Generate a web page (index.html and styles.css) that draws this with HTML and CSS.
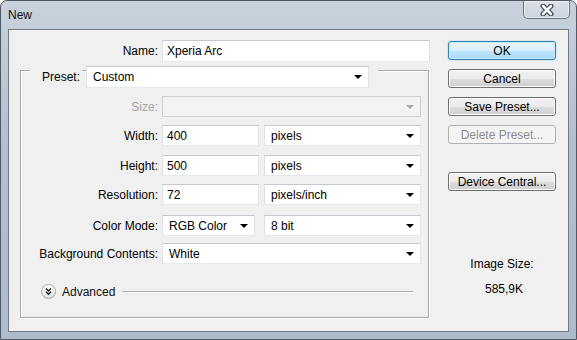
FILE: index.html
```html
<!DOCTYPE html>
<html>
<head>
    <title>New</title>
    <link rel="stylesheet" href="styles.css">
</head>
<body>
    <div class="window">
        <div class="titlebar">
            <span class="title">New</span>
            <div class="close">
                <svg width="16" height="12" viewBox="0 0 16 12">
                    <path d="M4 2 L12 10 M12 2 L4 10" stroke="#3b4654" stroke-width="5" stroke-linecap="round"/>
                    <path d="M4 2 L12 10 M12 2 L4 10" stroke="#fff" stroke-width="2.6" stroke-linecap="round"/>
                </svg>
            </div>
        </div>
        <div class="client">
            <div class="main">
                <div class="name-row">
                    <label>Name:</label>
                    <input class="text" value="Xperia Arc">
                </div>
                <div class="group">
                    <div class="group-head">
                        <label class="preset-label">Preset:</label>
                        <div class="combo preset"><span>Custom</span><i class="caret"></i></div>
                        <span class="mask"></span>
                    </div>
                    <div class="rows">
                        <div class="row off">
                            <label>Size:</label>
                            <div class="combo"><span></span><i class="caret"></i></div>
                        </div>
                        <div class="row">
                            <label>Width:</label>
                            <div class="pair">
                                <input class="text" value="400">
                                <div class="combo"><span>pixels</span><i class="caret"></i></div>
                            </div>
                        </div>
                        <div class="row height">
                            <label>Height:</label>
                            <div class="pair">
                                <input class="text" value="500">
                                <div class="combo"><span>pixels</span><i class="caret"></i></div>
                            </div>
                        </div>
                        <div class="row">
                            <label>Resolution:</label>
                            <div class="pair">
                                <input class="text" value="72">
                                <div class="combo"><span>pixels/inch</span><i class="caret"></i></div>
                            </div>
                        </div>
                        <div class="row mode">
                            <label>Color Mode:</label>
                            <div class="pair wide">
                                <div class="combo"><span>RGB Color</span><i class="caret"></i></div>
                                <div class="combo"><span>8 bit</span><i class="caret"></i></div>
                            </div>
                        </div>
                        <div class="row bg">
                            <label>Background Contents:</label>
                            <div class="combo"><span>White</span><i class="caret"></i></div>
                        </div>
                    </div>
                    <div class="advanced">
                        <span class="adv-icon">
                            <svg width="15" height="15" viewBox="0 0 15 15">
                                <defs>
                                    <linearGradient id="g" x1="0" y1="0" x2="0" y2="1">
                                        <stop offset="0" stop-color="#ffffff"/>
                                        <stop offset="1" stop-color="#dcdcdc"/>
                                    </linearGradient>
                                </defs>
                                <circle cx="7.5" cy="7.5" r="7" fill="url(#g)" stroke="#a7a7a7"/>
                                <path d="M5 4.5 L7.5 7 L10 4.5 M5 7.8 L7.5 10.3 L10 7.8" fill="none" stroke="#222" stroke-width="1.4"/>
                            </svg>
                        </span>
                        <span class="adv-text">Advanced</span>
                        <span class="adv-line"></span>
                    </div>
                </div>
            </div>
            <div class="side">
                <button class="btn default">OK</button>
                <button class="btn">Cancel</button>
                <button class="btn">Save Preset...</button>
                <button class="btn" disabled>Delete Preset...</button>
                <button class="btn central">Device Central...</button>
                <div class="size-title">Image Size:</div>
                <div class="size-value">585,9K</div>
            </div>
        </div>
    </div>
</body>
</html>
```

FILE: styles.css
```css
body {
    margin: 0;
    font-family: "Liberation Sans", Arial, sans-serif;
    font-size: 12px;
    color: #000;
    background: #fff;
}
.window {
    height: 340px;
    box-sizing: border-box;
    border: 1px solid #4e5966;
    border-radius: 7px 7px 0 0;
    background: linear-gradient(#c9d2dc, #b4c0cc 40%, #aebbc8);
    display: flex;
    flex-direction: column;
}
.titlebar {
    height: 28px;
    display: flex;
    justify-content: space-between;
    align-items: flex-start;
}
.title {
    padding: 7px 0 0 7px;
    font-size: 12px;
    color: #111;
}
.close {
    width: 47px;
    height: 18px;
    margin-right: 6px;
    box-sizing: border-box;
    border: 1px solid #6a7584;
    border-top: none;
    border-radius: 0 0 5px 5px;
    box-shadow: inset 0 0 0 1px rgba(255, 255, 255, 0.55);
    background: linear-gradient(rgba(255, 255, 255, 0.35), rgba(255, 255, 255, 0.08));
    display: flex;
    align-items: center;
    justify-content: center;
}
.client {
    flex: 1;
    margin: 0 7px 7px 7px;
    border: 1px solid #6f7b89;
    background: #f0f0f0;
    display: flex;
    padding-top: 10px;
}
.main {
    width: 422px;
}
.name-row {
    display: grid;
    grid-template-columns: 149px 268px;
    column-gap: 4px;
    align-items: center;
}
label {
    text-align: right;
    white-space: nowrap;
}
.text {
    height: 22px;
    box-sizing: border-box;
    margin: 0;
    padding: 0 4px;
    font: inherit;
    color: #000;
    background: #fff;
    border: 1px solid;
    border-color: #c5c8cf #e2e3ea #e3e9ef #dbdfe6;
    outline: none;
}
.combo {
    height: 22px;
    box-sizing: border-box;
    background: #fff;
    border: 1px solid;
    border-color: #c5c8cf #e2e3ea #e3e9ef #dbdfe6;
    display: flex;
    align-items: center;
    justify-content: space-between;
    padding: 0 6px;
}
.caret {
    width: 0;
    height: 0;
    border-left: 4px solid transparent;
    border-right: 4px solid transparent;
    border-top: 4px solid #000;
}
.group {
    margin: 8px 0 0 11px;
    width: 409px;
    box-sizing: border-box;
    border: 1px solid #a9a9a9;
    box-shadow: 1px 1px 0 #fff, inset 1px 1px 0 #fff;
    padding-bottom: 18px;
}
.group-head {
    margin: -5px 0 0 9px;
    display: flex;
    align-items: center;
}
.preset-label {
    width: 52px;
    box-sizing: border-box;
    padding-left: 12px;
    text-align: left;
    background: #f0f0f0;
    line-height: 22px;
}
.preset {
    width: 283px;
    margin-left: 4px;
}
.mask {
    width: 9px;
    height: 22px;
    background: #f0f0f0;
}
.rows {
    margin-top: 8px;
    display: flex;
    flex-direction: column;
    gap: 8px;
}
.row {
    display: grid;
    grid-template-columns: 137px 259px;
    column-gap: 4px;
    align-items: center;
}
.row .combo, .row .text {
    height: 21px;
}
.row.height {
    margin-top: 1px;
}
.row.mode {
    margin-top: 2px;
}
.row.bg {
    margin-top: -1px;
}
.pair {
    display: grid;
    grid-template-columns: 97px 157px;
    column-gap: 5px;
}
.pair .text {
    width: 97px;
}
.pair.wide {
    grid-template-columns: 93px 157px;
    column-gap: 9px;
}
.row.off label {
    color: #a3a3a3;
}
.row.off .combo {
    background: #f3f3f3;
    border-color: #cfcfcf;
}
.row.off .caret {
    border-top-color: #a8a8a8;
}
.advanced {
    margin: 20px 15px 0 20px;
    display: flex;
    align-items: center;
    height: 15px;
}
.adv-icon {
    display: flex;
}
.adv-text {
    margin-left: 6px;
    color: #111;
}
.adv-line {
    flex: 1;
    margin-left: 7px;
    margin-top: -1px;
    height: 1px;
    background: #a9a9a9;
    box-shadow: 0 1px 0 #fff;
}
.side {
    margin-left: 17px;
    width: 108px;
    padding-top: 1px;
    display: flex;
    flex-direction: column;
    gap: 9px;
}
.btn {
    height: 19px;
    margin: 0;
    padding: 0;
    font: inherit;
    color: #000;
    border: 1px solid #707070;
    border-radius: 3px;
    box-shadow: inset 0 0 0 1px #fcfcfc;
    background: linear-gradient(#f2f2f2, #ebebeb 50%, #dddddd 51%, #cfcfcf);
}
.btn.default {
    border-color: #3c7fb1;
    box-shadow: inset 0 0 0 1px #c4ecfd, 0 0 2px #7fd3f7;
    background: linear-gradient(#eaf6fd, #d9f0fc 50%, #bee6fd 51%, #a7d9f5);
}
.btn:disabled {
    color: #8d8d8d;
    border-color: #adb2b5;
    box-shadow: none;
    background: #f4f4f4;
}
.btn.central {
    margin-top: 19px;
}
.size-title {
    margin-top: 57px;
    text-align: center;
    line-height: 15px;
}
.size-value {
    margin-top: 1px;
    padding-left: 4px;
    text-align: center;
    line-height: 15px;
}
```
